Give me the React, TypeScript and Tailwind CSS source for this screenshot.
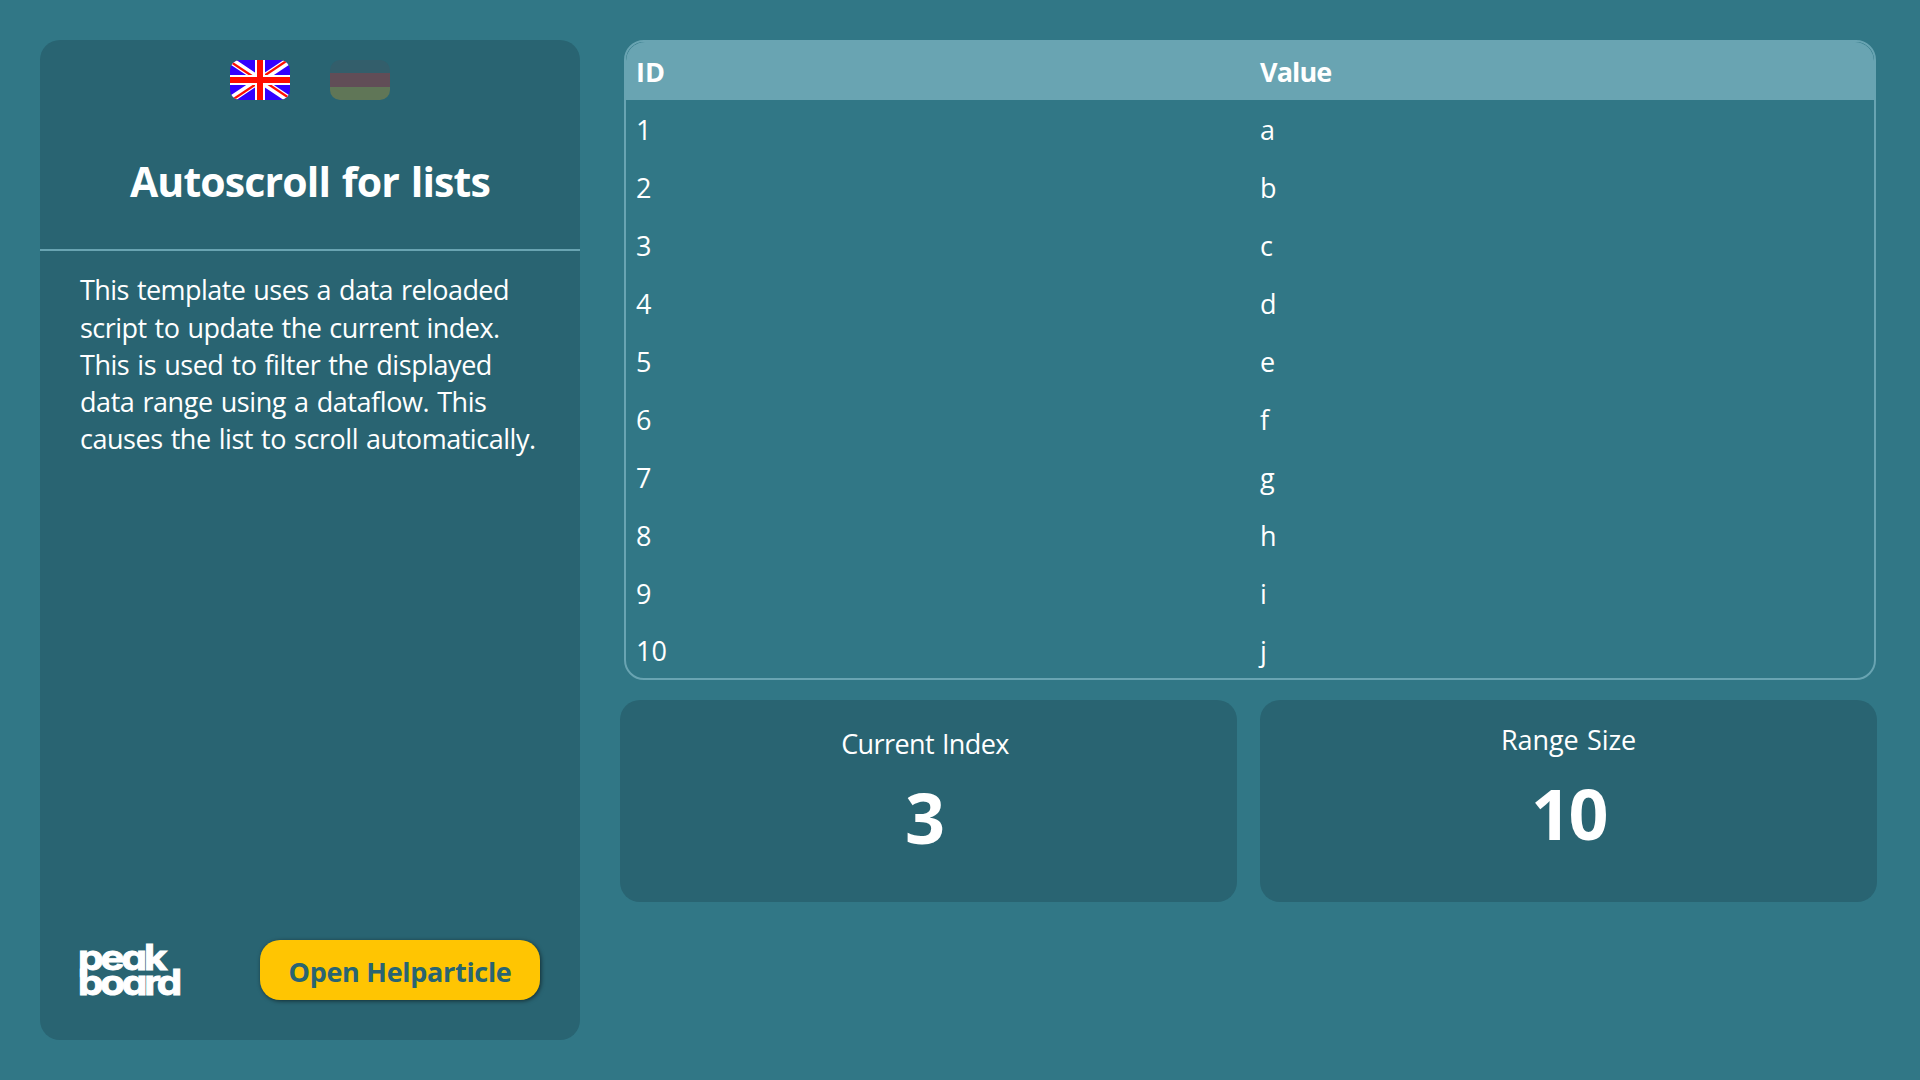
import React from "react";

const rows = ["a", "b", "c", "d", "e", "f", "g", "h", "i", "j"].map((value, i) => ({
  id: i + 1,
  value,
}));

function FlagUK() {
  return (
    <svg className="h-10 w-[60px] rounded-[10px]" viewBox="0 0 60 40" aria-label="English">
      <clipPath id="saltire">
        <path d="M30 20H60V40ZM30 20V40H0ZM30 20H0V0ZM30 20V0H60Z" />
      </clipPath>
      <rect width="60" height="40" fill="#3300ff" />
      <path d="M0 0L60 40M60 0L0 40" stroke="#fff" strokeWidth="7" />
      <path d="M0 0L60 40M60 0L0 40" stroke="#ff0d00" strokeWidth="4.6" clipPath="url(#saltire)" />
      <path d="M30 0V40M0 20H60" stroke="#fff" strokeWidth="10" />
      <path d="M30 0V40M0 20H60" stroke="#ff0d00" strokeWidth="6" />
    </svg>
  );
}

function FlagDE() {
  return (
    <div className="flex h-10 w-[60px] flex-col overflow-hidden rounded-[10px]" aria-label="Deutsch">
      <div className="flex-1 bg-[#335e6b]" />
      <div className="flex-1 bg-[#614d57]" />
      <div className="flex-1 bg-[#607657]" />
    </div>
  );
}

function Logo() {
  return (
    <svg
      className="h-[53px] w-[100px] overflow-visible font-['Inter',sans-serif] font-bold [font-feature-settings:'cv11']"
      viewBox="0 0 100 53"
      fill="#fff"
      stroke="#fff"
      strokeWidth="1"
    >
      <text x="-2" y="25.5" fontSize="35" letterSpacing="-2.6" textLength="86.5" lengthAdjust="spacingAndGlyphs">
        peak
      </text>
      <text x="-2" y="51" fontSize="35" letterSpacing="-2.6" textLength="101" lengthAdjust="spacingAndGlyphs">
        board
      </text>
    </svg>
  );
}

export default function App() {
  return (
    <div className="flex h-[1080px] w-[1920px] gap-10 bg-[#317786] p-10 font-['Open_Sans',sans-serif] text-[27px] text-white">
      <aside className="flex h-[1000px] w-[540px] shrink-0 flex-col rounded-[20px] bg-[#296472]">
        <div className="flex justify-center gap-10 pt-5">
          <FlagUK />
          <FlagDE />
        </div>
        <h1 className="mt-[51px] text-center text-[41px] leading-[60px] font-bold tracking-[-0.88px] [word-spacing:2px]">
          Autoscroll for lists
        </h1>
        <div className="mt-[38px] h-0.5 bg-[#69a4b2]" />
        <p className="mt-[20.4px] pl-10 leading-[37.25px] whitespace-nowrap [word-spacing:1.5px]">
          <span className="block tracking-[-0.55px]">This template uses a data reloaded</span>
          <span className="block tracking-[-0.53px]">script to update the current index.</span>
          <span className="block tracking-[-0.46px]">This is used to filter the displayed</span>
          <span className="block tracking-[-0.44px]">data range using a dataflow. This</span>
          <span className="block tracking-[-0.46px]">causes the list to scroll automatically.</span>
        </p>
        <div className="mt-auto flex items-center justify-between px-10 pb-10">
          <Logo />
          <button className="h-[60px] w-[280px] rounded-[20px] bg-[#ffc502] pt-[5px] font-bold tracking-[-0.3px] text-[#296472] shadow-[1px_1px_4px_rgba(0,0,0,0.55)]">
            Open Helparticle
          </button>
        </div>
      </aside>

      <main className="flex w-[1257px] flex-col">
        <section className="ml-1 h-[640px] w-[1252px] overflow-hidden rounded-[20px] border-2 border-[#69a4b2] leading-[60px]">
          <div className="grid h-[58px] grid-cols-2 rounded-t-[19px] bg-[#69a4b2] font-bold">
            <div className="pl-[10px]">ID</div>
            <div className="pl-[10px] tracking-[-0.9px]">Value</div>
          </div>
          {rows.map((row) => (
            <div key={row.id} className="grid h-[58px] grid-cols-2 last:leading-[58px]">
              <div className="pl-[10px]">{row.id}</div>
              <div className="pl-[10px]">{row.value}</div>
            </div>
          ))}
        </section>

        <div className="mt-5 flex gap-[23px] text-center">
          <section className="h-[202px] w-[617px] rounded-[20px] bg-[#296472] pt-6 pr-[7px]">
            <div className="leading-10 tracking-[-0.6px] [word-spacing:1.5px]">Current Index</div>
            <div className="mt-2 text-[70px] leading-[90px] font-bold">3</div>
          </section>
          <section className="h-[202px] w-[617px] rounded-[20px] bg-[#296472] pt-5">
            <div className="leading-10 tracking-[-0.08px] [word-spacing:1.5px]">Range Size</div>
            <div className="mt-2 text-[70px] leading-[90px] font-bold tracking-[-2.5px]">10</div>
          </section>
        </div>
      </main>
    </div>
  );
}
